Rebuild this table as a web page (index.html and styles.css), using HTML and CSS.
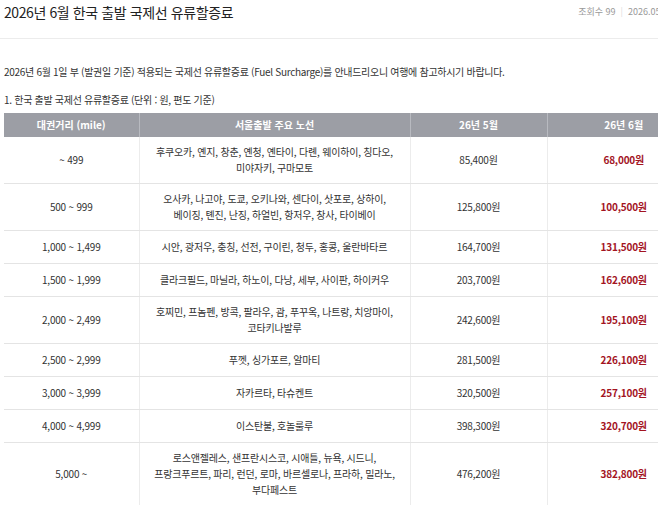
FILE: index.html
```html
<!DOCTYPE html>
<html lang="ko">
<head>
<meta charset="utf-8">
<title>2026년 6월 한국 출발 국제선 유류할증료</title>
<link rel="stylesheet" href="styles.css">
</head>
<body>
<div class="page">
  <header class="head">
    <h1 class="title">2026년 6월 한국 출발 국제선 유류할증료</h1>
    <div class="meta"><span>조회수 99</span><span class="sep">|</span><span>2026.05.29</span></div>
  </header>
  <div class="content">
    <p class="intro">2026년 6월 1일 부 (발권일 기준) 적용되는 국제선 유류할증료 (Fuel Surcharge)를 안내드리오니 여행에 참고하시기 바랍니다.</p>
    <p class="sub">1. 한국 출발 국제선 유류할증료 (단위 : 원, 편도 기준)</p>
    <table class="fare">
      <colgroup>
        <col class="c1"><col class="c2"><col class="c3"><col class="c4">
      </colgroup>
      <thead>
        <tr><th>대권거리 (mile)</th><th>서울출발 주요 노선</th><th>26년 5월</th><th>26년 6월</th></tr>
      </thead>
      <tbody>
        <tr><td>~ 499</td><td>후쿠오카, 옌지, 창춘, 옌청, 옌타이, 다롄, 웨이하이, 칭다오,<br>미야자키, 구마모토</td><td>85,400원</td><td class="new">68,000원</td></tr>
        <tr><td>500 ~ 999</td><td>오사카, 나고야, 도쿄, 오키나와, 센다이, 삿포로, 상하이,<br>베이징, 톈진, 난징, 하얼빈, 항저우, 창사, 타이베이</td><td>125,800원</td><td class="new">100,500원</td></tr>
        <tr><td>1,000 ~ 1,499</td><td>시안, 광저우, 충칭, 선전, 구이린, 청두, 홍콩, 울란바타르</td><td>164,700원</td><td class="new">131,500원</td></tr>
        <tr><td>1,500 ~ 1,999</td><td>클라크필드, 마닐라, 하노이, 다낭, 세부, 사이판, 하이커우</td><td>203,700원</td><td class="new">162,600원</td></tr>
        <tr><td>2,000 ~ 2,499</td><td>호찌민, 프놈펜, 방콕, 팔라우, 괌, 푸꾸옥, 나트랑, 치앙마이,<br>코타키나발루</td><td>242,600원</td><td class="new">195,100원</td></tr>
        <tr><td>2,500 ~ 2,999</td><td>푸껫, 싱가포르, 알마티</td><td>281,500원</td><td class="new">226,100원</td></tr>
        <tr><td>3,000 ~ 3,999</td><td>자카르타, 타슈켄트</td><td>320,500원</td><td class="new">257,100원</td></tr>
        <tr><td>4,000 ~ 4,999</td><td>이스탄불, 호놀룰루</td><td>398,300원</td><td class="new">320,700원</td></tr>
        <tr><td>5,000 ~</td><td>로스앤젤레스, 샌프란시스코, 시애틀, 뉴욕, 시드니,<br>프랑크푸르트, 파리, 런던, 로마, 바르셀로나, 프라하, 밀라노,<br>부다페스트</td><td>476,200원</td><td class="new">382,800원</td></tr>
      </tbody>
    </table>
  </div>
</div>
</body>
</html>
```

FILE: styles.css
```css
html {
  overflow: hidden;
  background: #fff;
}
body {
  margin: 0;
  font-family: "Noto Sans CJK KR", "Noto Sans", sans-serif;
  color: #333;
  font-size: 10px;
}
.page {
  width: 696px;
  padding-left: 4px;
}
.head {
  display: flex;
  justify-content: space-between;
  height: 38px;
  border-bottom: 1px solid #ececec;
  margin-left: -4px;
  padding-left: 4px;
  align-items: flex-start;
}
.title {
  margin: 1px 0 0;
  font-size: 14px;
  font-weight: 400;
  line-height: 22px;
  color: #222;
  letter-spacing: -0.4px;
}
.meta {
  margin-top: 5px;
  display: flex;
  gap: 5px;
  font-size: 9px;
  line-height: 14px;
  color: #999;
  margin-right: 27px;
}
.sep {
  color: #ddd;
}
.content {
  padding-top: 25px;
}
.intro {
  margin: 0;
  line-height: 16px;
  letter-spacing: -0.3px;
}
.sub {
  margin: 12px 0 0;
  line-height: 16px;
  letter-spacing: -0.3px;
}
.fare {
  margin-top: 5px;
  border-collapse: collapse;
  table-layout: fixed;
  width: 696px;
}
.c1 { width: 135px; }
.c2 { width: 271px; }
.c3 { width: 137px; }
.c4 { width: 153px; }
.fare th {
  background: #9c9ea5;
  color: #fff;
  font-weight: 700;
  height: 24px;
  padding: 0;
  line-height: 24px;
  border-left: 1px solid #b8bac0;
}
.fare th:first-child,
.fare td:first-child {
  border-left: none;
}
.fare tbody tr {
  height: 33px;
}
.fare td {
  text-align: center;
  padding: 7px 0;
  line-height: 16px;
  border-bottom: 1px solid #e4e4e4;
  border-left: 1px solid #ececec;
  letter-spacing: -0.2px;
}
.fare td.new {
  color: #a3141f;
  font-weight: 700;
}
```
